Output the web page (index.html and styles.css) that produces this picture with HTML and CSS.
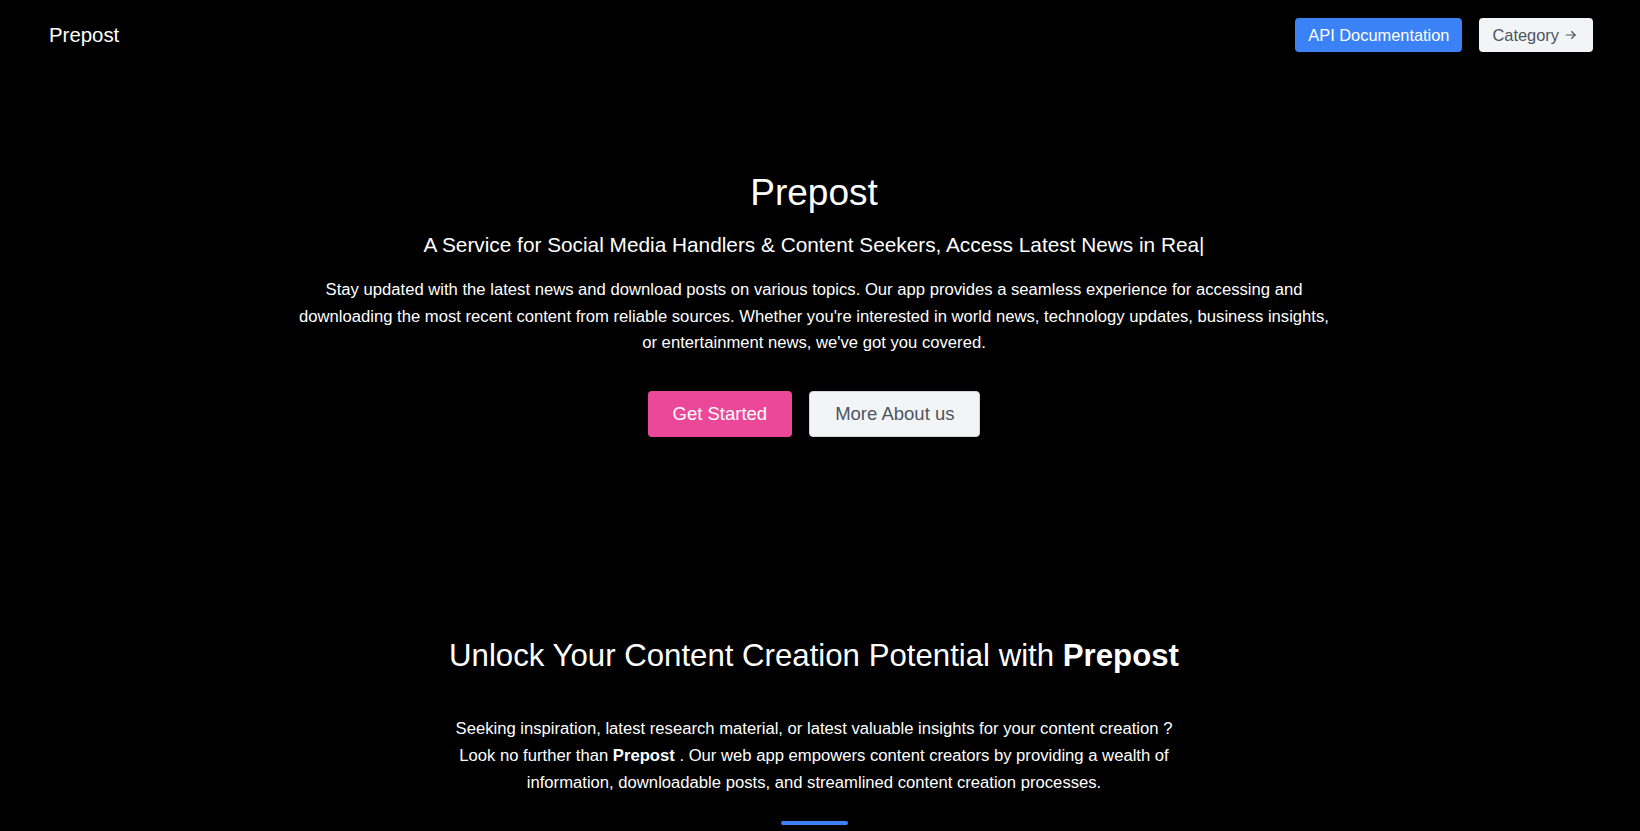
FILE: index.html
```html
<!DOCTYPE html>
<html lang="en">
<head>
<meta charset="utf-8">
<title>Prepost</title>
<link rel="stylesheet" href="styles.css">
</head>
<body>
<header class="nav">
  <div class="logo">Prepost</div>
  <div class="nav-actions">
    <a class="btn-api" href="#">API Documentation</a>
    <a class="btn-cat" href="#">Category <svg class="arrow" viewBox="0 0 24 24" width="14" height="14" fill="none" stroke="currentColor" stroke-width="2" stroke-linecap="round" stroke-linejoin="round"><path d="M4 12h15"/><path d="M13 6l6 6-6 6"/></svg></a>
  </div>
</header>
<main>
  <section class="hero">
    <h1 class="hero-title">Prepost</h1>
    <h2 class="hero-sub">A Service for Social Media Handlers &amp; Content Seekers, Access Latest News in Rea|</h2>
    <p class="hero-text">Stay updated with the latest news and download posts on various topics. Our app provides a seamless experience for accessing and downloading the most recent content from reliable sources. Whether you're interested in world news, technology updates, business insights, or entertainment news, we've got you covered.</p>
    <div class="hero-buttons">
      <a class="btn-primary" href="#">Get Started</a>
      <a class="btn-secondary" href="#">More About us</a>
    </div>
  </section>
  <section class="about">
    <h2 class="about-title">Unlock Your Content Creation Potential with <strong>Prepost</strong></h2>
    <p class="about-text">Seeking inspiration, latest research material, or latest valuable insights for your content creation ? Look no further than <strong>Prepost</strong> . Our web app empowers content creators by providing a wealth of information, downloadable posts, and streamlined content creation processes.</p>
    <div class="bar"></div>
  </section>
</main>
</body>
</html>
```
FILE: styles.css
```css
html, body {
  margin: 0;
  padding: 0;
  background: #000;
  color: #fff;
  font-family: "Liberation Sans", Arial, sans-serif;
}
body {
  overflow: hidden;
  height: 831px;
}
a { text-decoration: none; }

.nav {
  display: flex;
  justify-content: space-between;
  align-items: center;
  padding: 18px 47px 0 49px;
  height: 34px;
}
.logo {
  font-size: 20.4px;
  color: #fff;
}
.nav-actions {
  display: flex;
  gap: 17px;
}
.btn-api {
  display: block;
  background: #3b82f6;
  color: #fff;
  font-size: 16.4px;
  line-height: 24px;
  padding: 5px 13px;
  border-radius: 4px;
}
.btn-cat {
  display: flex;
  align-items: center;
  gap: 5px;
  background: #f3f4f6;
  color: #4b5563;
  font-size: 16.4px;
  line-height: 24px;
  padding: 5px 15px 5px 13px;
  border-radius: 4px;
}
.arrow { display: block; }

.hero, .about {
  display: flex;
  flex-direction: column;
  align-items: center;
  text-align: center;
  padding-right: 12px;
}
.hero { padding-top: 119px; }
.hero-title {
  margin: 0;
  font-size: 37px;
  line-height: 44px;
  font-weight: 400;
}
.hero-sub {
  margin: 16px 0 0;
  font-size: 20.8px;
  line-height: 28px;
  font-weight: 400;
}
.hero-text {
  margin: 18px 0 0;
  max-width: 1040px;
  font-size: 16.65px;
  line-height: 26.7px;
}
.hero-buttons {
  display: flex;
  gap: 17px;
  margin-top: 34px;
}
.btn-primary, .btn-secondary {
  display: block;
  font-size: 18.5px;
  line-height: 26px;
  padding: 10px 25px;
  border-radius: 4px;
}
.btn-primary {
  background: #ec4899;
  color: #fff;
  border: 0;
}
.btn-secondary {
  background: #f3f4f6;
  color: #4b5563;
  border: 1px solid #d1d5db;
  padding: 9px 25px;
}

.about { padding-top: 201px; }
.about-title {
  margin: 0;
  font-size: 31.2px;
  line-height: 36px;
  font-weight: 400;
}
.about-title strong { font-weight: 700; }
.about-text {
  margin: 42px 0 0;
  max-width: 750px;
  font-size: 16.65px;
  line-height: 26.7px;
}
.bar {
  margin-top: 25px;
  width: 67px;
  height: 4px;
  border-radius: 2px;
  background: #3b82f6;
}
```
